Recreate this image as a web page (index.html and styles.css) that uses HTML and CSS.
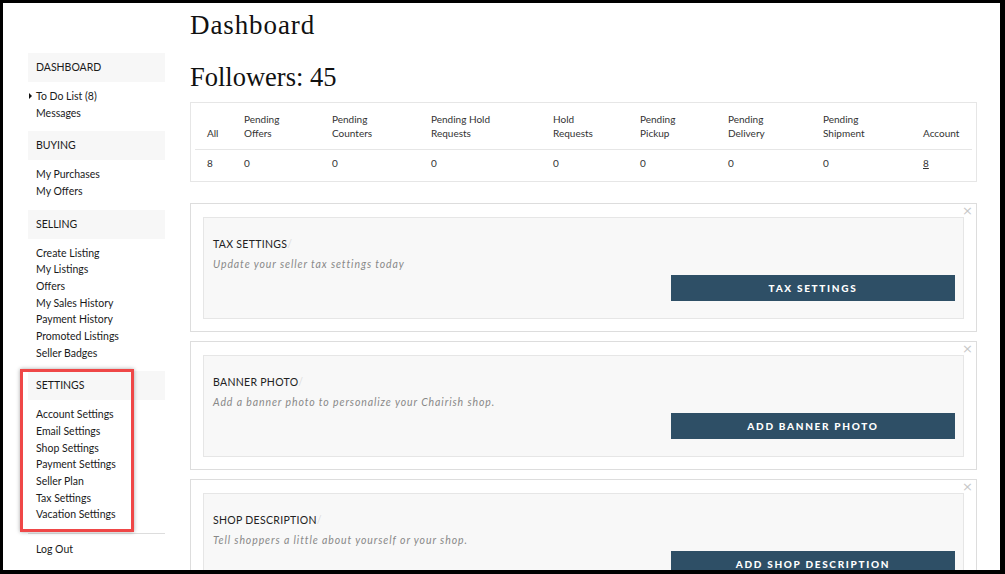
FILE: index.html
```html
<!DOCTYPE html>
<html lang="en">
<head>
    <meta charset="UTF-8">
    <title>Dashboard</title>
    <link rel="stylesheet" href="styles.css">
</head>
<body>
    <div class="frame">
        <!-- Sidebar navigation -->
        <aside class="sidebar">
            <div class="nav-head">DASHBOARD</div>
            <ul class="nav-list">
                <li class="current">To Do List (8)</li>
                <li>Messages</li>
            </ul>
            <div class="nav-head">BUYING</div>
            <ul class="nav-list">
                <li>My Purchases</li>
                <li>My Offers</li>
            </ul>
            <div class="nav-head">SELLING</div>
            <ul class="nav-list">
                <li>Create Listing</li>
                <li>My Listings</li>
                <li>Offers</li>
                <li>My Sales History</li>
                <li>Payment History</li>
                <li>Promoted Listings</li>
                <li>Seller Badges</li>
            </ul>
            <div class="nav-head">SETTINGS</div>
            <ul class="nav-list">
                <li>Account Settings</li>
                <li>Email Settings</li>
                <li>Shop Settings</li>
                <li>Payment Settings</li>
                <li>Seller Plan</li>
                <li>Tax Settings</li>
                <li>Vacation Settings</li>
            </ul>
            <ul class="nav-list logout">
                <li>Log Out</li>
            </ul>
        </aside>

        <!-- Main content -->
        <main class="main">
            <h1 class="page-title">Dashboard</h1>
            <h2 class="followers">Followers: 45</h2>

            <div class="stats">
                <div class="stats-row stats-head">
                    <div>All</div>
                    <div>Pending<br>Offers</div>
                    <div>Pending<br>Counters</div>
                    <div>Pending Hold<br>Requests</div>
                    <div>Hold<br>Requests</div>
                    <div>Pending<br>Pickup</div>
                    <div>Pending<br>Delivery</div>
                    <div>Pending<br>Shipment</div>
                    <div>Account</div>
                </div>
                <div class="stats-row">
                    <div>8</div>
                    <div>0</div>
                    <div>0</div>
                    <div>0</div>
                    <div>0</div>
                    <div>0</div>
                    <div>0</div>
                    <div>0</div>
                    <div><a href="#">8</a></div>
                </div>
            </div>

            <div class="task">
                <span class="close">&times;</span>
                <div class="task-inner">
                    <div class="task-title">TAX SETTINGS<span class="slash">/</span></div>
                    <div class="task-text">Update your seller tax settings today</div>
                    <div class="task-action"><button>TAX SETTINGS</button></div>
                </div>
            </div>

            <div class="task">
                <span class="close">&times;</span>
                <div class="task-inner">
                    <div class="task-title">BANNER PHOTO<span class="slash">/</span></div>
                    <div class="task-text">Add a banner photo to personalize your Chairish shop.</div>
                    <div class="task-action"><button>ADD BANNER PHOTO</button></div>
                </div>
            </div>

            <div class="task">
                <span class="close">&times;</span>
                <div class="task-inner">
                    <div class="task-title">SHOP DESCRIPTION<span class="slash">/</span></div>
                    <div class="task-text">Tell shoppers a little about yourself or your shop.</div>
                    <div class="task-action"><button>ADD SHOP DESCRIPTION</button></div>
                </div>
            </div>
        </main>

        <!-- Annotation box around settings -->
        <div class="highlight"></div>
    </div>
</body>
</html>
```

FILE: styles.css
```css
html, body {
    margin: 0;
    padding: 0;
    background: #000;
}
.frame {
    position: relative;
    box-sizing: border-box;
    width: 1005px;
    height: 574px;
    border-style: solid;
    border-color: #000;
    border-width: 3px 5px 4px 3px;
    background: #fff;
    overflow: hidden;
    display: flex;
    align-items: flex-start;
    gap: 25px;
    padding-left: 25px;
    font-family: Lato, "Open Sans", sans-serif;
    color: #222;
}

/* Sidebar */
.sidebar {
    width: 137px;
    flex-shrink: 0;
    margin-top: 50px;
    font-size: 10.5px;
}
.nav-head {
    height: 29px;
    line-height: 29px;
    padding-left: 8px;
    background: #f7f7f7;
    font-size: 10.5px;
    color: #1a1a1a;
}
.nav-list {
    list-style: none;
    margin: 0;
    padding: 6px 0 10px 8px;
    color: #1a1a1a;
}
.nav-list li {
    line-height: 16.67px;
    height: 16.67px;
}
.nav-list .current::before {
    content: "";
    display: inline-block;
    width: 0;
    height: 0;
    border-top: 3px solid transparent;
    border-bottom: 3px solid transparent;
    border-left: 3px solid #111;
    margin-left: -7px;
    margin-right: 4px;
    vertical-align: 1px;
}
.logout {
    border-top: 1px solid #ddd;
    padding-top: 7px;
}

/* Main */
.main {
    width: 787px;
    flex-shrink: 0;
}
.page-title, .followers {
    font-family: "Liberation Serif", serif;
    font-weight: normal;
    margin: 0;
    color: #111;
    line-height: 32px;
}
.page-title {
    font-size: 27px;
    letter-spacing: 0.9px;
    margin-top: 6px;
}
.followers {
    font-size: 26.5px;
    margin-top: 20px;
    margin-bottom: 9px;
}

.stats {
    border: 1px solid #e6e6e6;
    padding: 4px;
    font-size: 10px;
    color: #333;
}
.stats-row {
    display: grid;
    grid-template-columns: 37px 88px 99px 122px 87px 88px 95px 100px 1fr;
    align-items: end;
    padding: 6px 0 7px 12px;
    line-height: 14px;
}
.stats-head {
    border-bottom: 1px solid #e6e6e6;
    padding-top: 5px;
    padding-bottom: 9px;
}
.stats-row a {
    color: #333;
}

/* Task cards */
.task {
    position: relative;
    border: 1px solid #ddd;
    padding: 13px 12px 12px 12px;
    margin-top: 21px;
}
.task + .task {
    margin-top: 9px;
}
.close {
    position: absolute;
    top: 0;
    right: 3px;
    font-size: 13px;
    line-height: 13px;
    color: #c8c8c8;
    font-family: "DejaVu Sans", sans-serif;
}
.task-inner {
    background: #f8f8f8;
    border: 1px solid #e6e6e6;
    padding: 19px 8px 17px 9px;
}
.task-title {
    font-size: 10.5px;
    line-height: 14px;
    letter-spacing: 0.3px;
    color: #222;
}
.slash {
    color: #ddd;
}
.task-text {
    font-style: italic;
    font-size: 10.5px;
    line-height: 14px;
    letter-spacing: 0.9px;
    color: #888;
    margin-top: 6px;
}
.task-action {
    display: flex;
    justify-content: flex-end;
    margin-top: 4px;
}
.task-action button {
    width: 284px;
    height: 26px;
    border: none;
    background: #2e4f66;
    color: #fff;
    font-family: Lato, sans-serif;
    font-weight: 900;
    font-size: 10px;
    letter-spacing: 1.7px;
    cursor: pointer;
}

/* Red annotation */
.highlight {
    position: absolute;
    left: 17px;
    top: 366px;
    width: 108px;
    height: 157px;
    border: 3px solid #ef4747;
    box-shadow: 0 0 4px rgba(0, 0, 0, 0.35);
}
```
